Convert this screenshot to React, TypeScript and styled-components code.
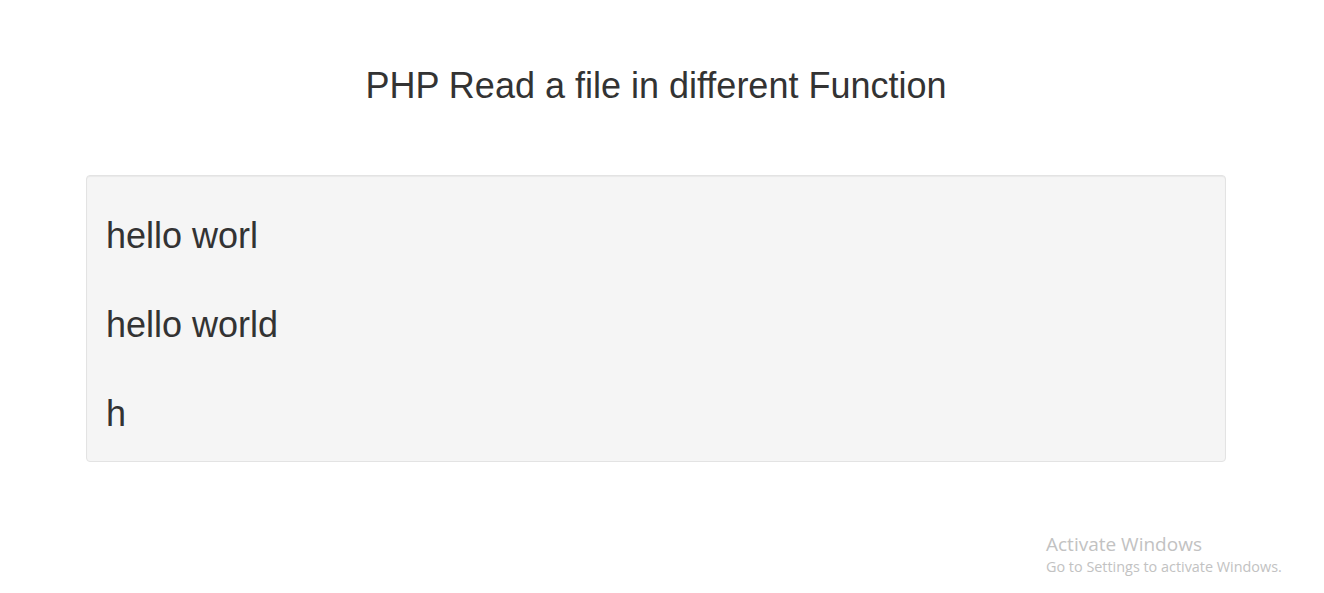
import React from "react";
import styled, { createGlobalStyle } from "styled-components";

const Global = createGlobalStyle`
  html, body { margin: 0; padding: 0; background: #fff; }
  body { font-family: "Liberation Sans", Arial, sans-serif; color: #333; }
`;

const Page = styled.div`
  position: relative;
  width: 1324px;
  height: 593px;
  overflow: hidden;
`;

const Container = styled.div`
  width: 1140px;
  margin-left: 86px;
  padding-top: 66px;
`;

const Title = styled.h2`
  margin: 0 0 69px;
  font-size: 36px;
  line-height: 40px;
  font-weight: 400;
  text-align: center;
  color: #333;
`;

const Well = styled.div`
  box-sizing: border-box;
  height: 287px;
  background: #f5f5f5;
  border: 1px solid #e3e3e3;
  border-radius: 4px;
  box-shadow: inset 0 1px 1px rgba(0, 0, 0, 0.05);
  padding: 40px 19px 0;
  display: flex;
  flex-direction: column;
  gap: 49px;
`;

const Line = styled.p`
  margin: 0;
  font-size: 36px;
  line-height: 40px;
  color: #333;
`;

const Watermark = styled.div`
  position: absolute;
  left: 1046px;
  top: 532px;
  font-family: "Open Sans", "Noto Sans", sans-serif;
  color: #c2c2c2;
`;

const WmTitle = styled.div`
  font-size: 19px;
  line-height: 25px;
`;

const WmSub = styled.div`
  font-size: 14.4px;
  line-height: 19px;
`;

export default function App() {
  return (
    <Page>
      <Global />
      <Container>
        <Title>PHP Read a file in different Function</Title>
        <Well>
          <Line>hello worl</Line>
          <Line>hello world</Line>
          <Line>h</Line>
        </Well>
      </Container>
      <Watermark>
        <WmTitle>Activate Windows</WmTitle>
        <WmSub>Go to Settings to activate Windows.</WmSub>
      </Watermark>
    </Page>
  );
}
